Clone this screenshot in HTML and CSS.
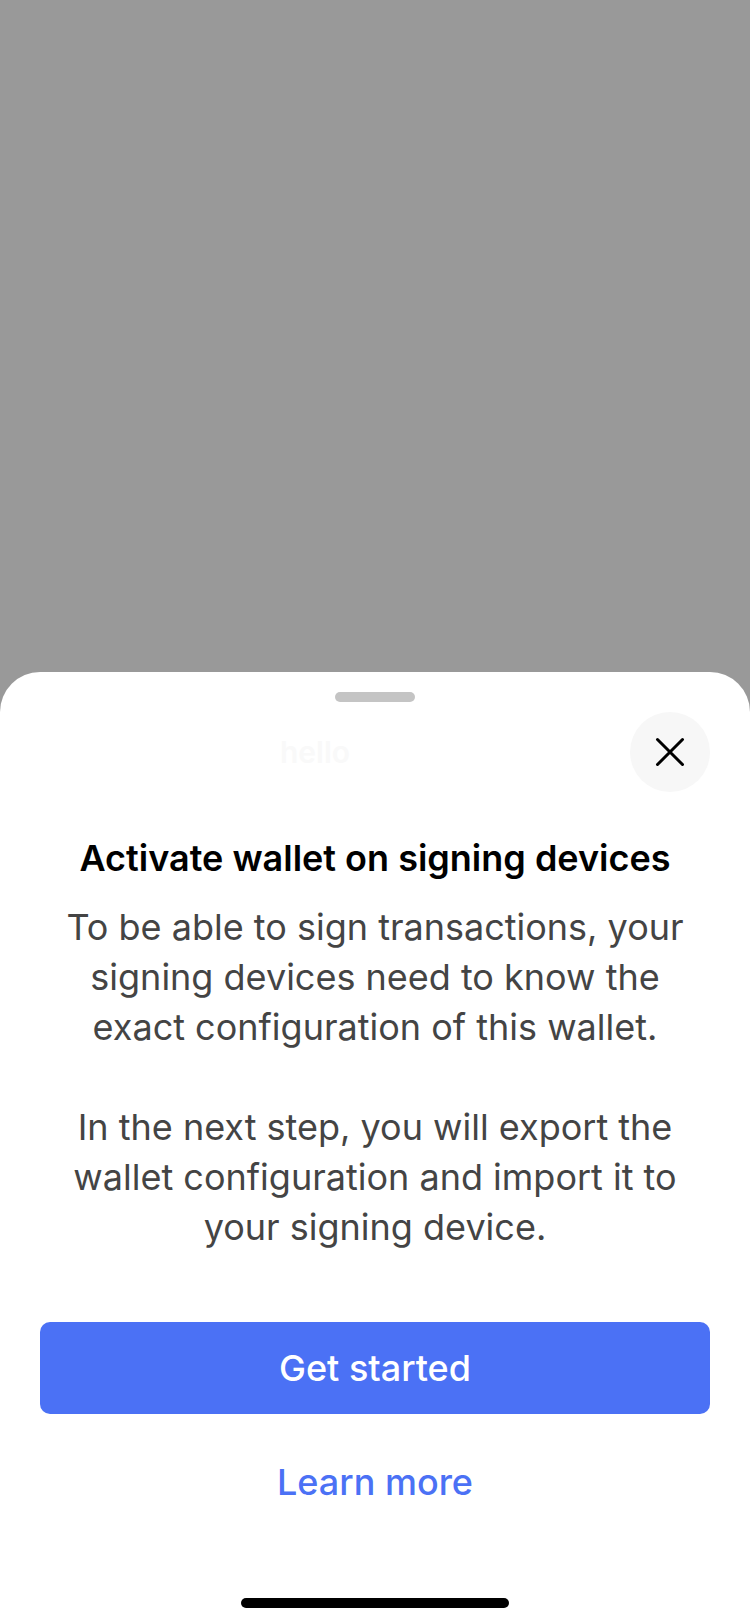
FILE: index.html
```html
<!DOCTYPE html>
<html lang="en">
<head>
<meta charset="utf-8">
<title>Activate wallet</title>
<link rel="stylesheet" href="styles.css">
</head>
<body>
<div class="screen">
  <div class="backdrop"></div>
  <div class="sheet">
    <div class="handle"></div>
    <div class="sheet-header">
      <div class="sheet-title">hello</div>
      <button class="close-btn" aria-label="Close">
        <svg width="30" height="30" viewBox="0 0 30 30"><path d="M2.5 2.5 L27.5 27.5 M27.5 2.5 L2.5 27.5" stroke="#000" stroke-width="3" stroke-linecap="round" fill="none"/></svg>
      </button>
    </div>
    <h1 class="title">Activate wallet on signing devices</h1>
    <p class="body-text">To be able to sign transactions, your signing devices need to know the exact configuration of this wallet.</p>
    <p class="body-text gap">In the next step, you will export the wallet configuration and import it to your signing device.</p>
    <button class="primary-btn">Get started</button>
    <button class="link-btn">Learn more</button>
    <div class="spacer"></div>
    <div class="home-indicator"></div>
  </div>
</div>
</body>
</html>
```

FILE: styles.css
```css
* { box-sizing: border-box; }
html, body {
  margin: 0;
  padding: 0;
  background: #999999;
}
body {
  font-family: Inter, "Noto Sans", sans-serif;
}
.screen {
  width: 750px;
  height: 1624px;
  display: flex;
  flex-direction: column;
  background: #999999;
}
.backdrop {
  height: 672px;
  flex: none;
}
.sheet {
  flex: 1;
  background: #ffffff;
  border-radius: 40px 40px 0 0;
  display: flex;
  flex-direction: column;
  align-items: stretch;
}
.handle {
  width: 80px;
  height: 10px;
  border-radius: 5px;
  background: #c4c4c4;
  margin: 20px auto 0;
}
.sheet-header {
  display: flex;
  align-items: center;
  margin-top: 10px;
  height: 80px;
}
.sheet-title {
  flex: 1;
  text-align: center;
  font-size: 30px;
  font-weight: 600;
  color: #f9f9f9;
}
.close-btn {
  width: 80px;
  height: 80px;
  border-radius: 50%;
  border: none;
  background: #f7f7f7;
  margin-right: 40px;
  padding: 0;
  display: flex;
  align-items: center;
  justify-content: center;
}
.title {
  margin: 46px 30px 0;
  font-size: 36px;
  line-height: 40px;
  font-weight: 600;
  color: #000000;
  text-align: center;
}
.body-text {
  margin: 24px 60px 0;
  font-size: 36px;
  line-height: 50px;
  font-weight: 400;
  color: #444444;
  text-align: center;
}
.body-text.gap {
  margin-top: 50px;
}
.primary-btn {
  margin: 70px 40px 0;
  height: 92px;
  border: none;
  border-radius: 10px;
  background: #4b71f5;
  color: #ffffff;
  font-family: Inter, "Noto Sans", sans-serif;
  font-size: 36px;
  font-weight: 500;
}
.link-btn {
  margin: 48px auto 0;
  height: 40px;
  line-height: 40px;
  border: none;
  background: none;
  padding: 0;
  color: #4b71f5;
  font-family: Inter, "Noto Sans", sans-serif;
  font-size: 36px;
  font-weight: 500;
}
.spacer { flex: 1; }
.home-indicator {
  width: 268px;
  height: 10px;
  border-radius: 5px;
  background: #000000;
  margin: 0 auto 16px;
}
```
